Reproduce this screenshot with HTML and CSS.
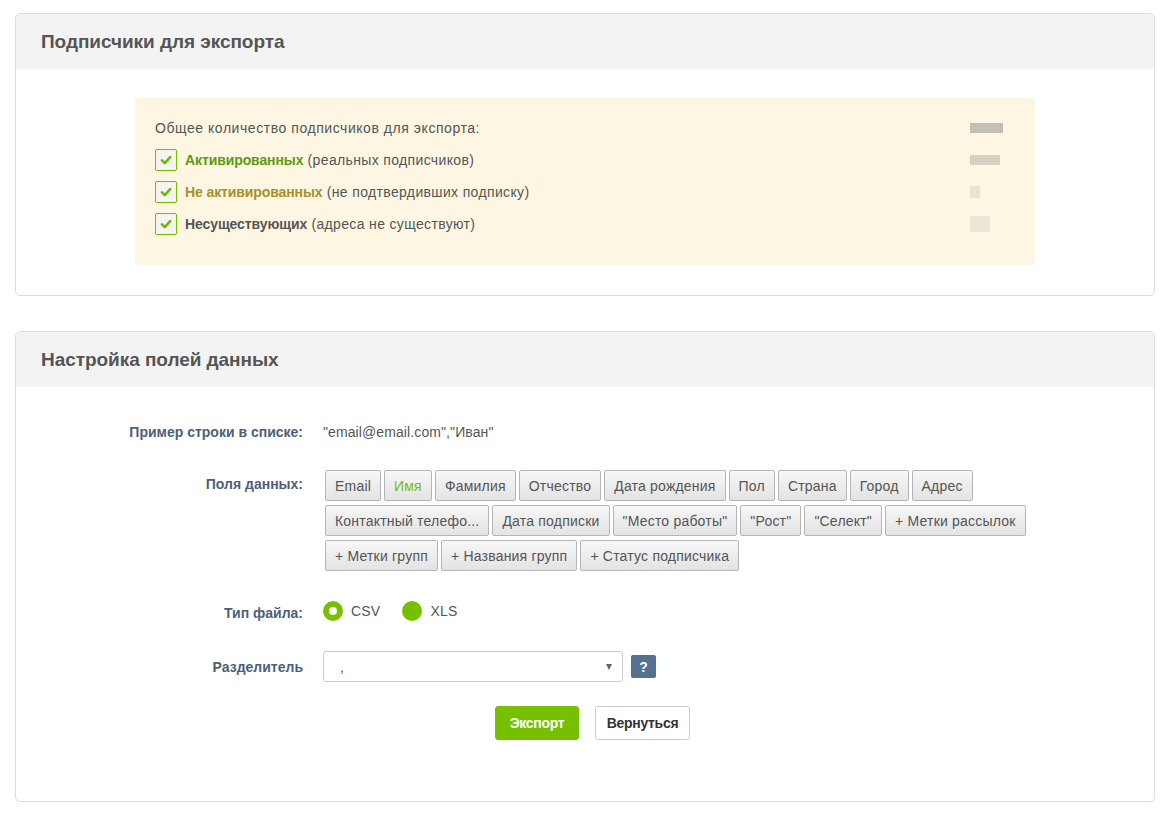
FILE: index.html
```html
<!DOCTYPE html>
<html lang="ru">
<head>
<meta charset="utf-8">
<title>Экспорт подписчиков</title>
<link rel="stylesheet" href="styles.css">
</head>
<body>
<div class="page">
  <section class="panel panel-summary">
    <header class="panel-head"><h2>Подписчики для экспорта</h2></header>
    <div class="panel-body">
      <div class="notice">
        <div class="notice-row notice-total">
          <span class="notice-text">Общее количество подписчиков для экспорта:</span>
          <span class="count-cell"><span class="count count-a"></span></span>
        </div>
        <div class="notice-row">
          <label class="check"><span class="box"><svg viewBox="0 0 12 12"><path d="M2.5 6.3 L5 8.6 L9.6 3.6" /></svg></span><b class="st-active">Активированных</b>&nbsp;(реальных подписчиков)</label>
          <span class="count-cell"><span class="count count-b"></span></span>
        </div>
        <div class="notice-row">
          <label class="check"><span class="box"><svg viewBox="0 0 12 12"><path d="M2.5 6.3 L5 8.6 L9.6 3.6" /></svg></span><b class="st-pending">Не активированных</b>&nbsp;(не подтвердивших подписку)</label>
          <span class="count-cell"><span class="count count-c"></span></span>
        </div>
        <div class="notice-row">
          <label class="check"><span class="box"><svg viewBox="0 0 12 12"><path d="M2.5 6.3 L5 8.6 L9.6 3.6" /></svg></span><b class="st-missing">Несуществующих</b>&nbsp;(адреса не существуют)</label>
          <span class="count-cell"><span class="count count-d"></span></span>
        </div>
      </div>
    </div>
  </section>

  <section class="panel panel-fields">
    <header class="panel-head"><h2>Настройка полей данных</h2></header>
    <div class="panel-body form">
      <div class="form-row row-sample">
        <div class="form-label">Пример строки в списке:</div>
        <div class="form-value sample">"email@email.com","Иван"</div>
      </div>
      <div class="form-row row-tags">
        <div class="form-label">Поля данных:</div>
        <div class="form-value tags">
          <span class="tag">Email</span>
          <span class="tag tag-on">Имя</span>
          <span class="tag">Фамилия</span>
          <span class="tag">Отчество</span>
          <span class="tag">Дата рождения</span>
          <span class="tag">Пол</span>
          <span class="tag">Страна</span>
          <span class="tag">Город</span>
          <span class="tag">Адрес</span>
          <span class="tag">Контактный телефо...</span>
          <span class="tag">Дата подписки</span>
          <span class="tag">"Место работы"</span>
          <span class="tag">"Рост"</span>
          <span class="tag">"Селект"</span>
          <span class="tag">+ Метки рассылок</span>
          <span class="tag">+ Метки групп</span>
          <span class="tag">+ Названия групп</span>
          <span class="tag">+ Статус подписчика</span>
        </div>
      </div>
      <div class="form-row row-type">
        <div class="form-label">Тип файла:</div>
        <div class="form-value radios">
          <label class="radio"><span class="dot dot-on"></span>CSV</label>
          <label class="radio"><span class="dot"></span>XLS</label>
        </div>
      </div>
      <div class="form-row row-sep">
        <div class="form-label">Разделитель</div>
        <div class="form-value sep">
          <div class="select"><span>,</span><span class="caret"></span></div>
          <span class="help">?</span>
        </div>
      </div>
      <div class="actions">
        <button class="btn btn-primary">Экспорт</button>
        <button class="btn btn-default">Вернуться</button>
      </div>
    </div>
  </section>
</div>
</body>
</html>
```

FILE: styles.css
```css
* { box-sizing: border-box; }
html, body { margin: 0; padding: 0; background: #fff; }
body {
  font-family: "Liberation Sans", Arial, sans-serif;
  font-size: 14px;
  color: #555;
}
.page {
  padding: 13px 16px 0 15px;
  display: flex;
  flex-direction: column;
  gap: 35px;
}
.panel {
  border: 1px solid #dcdcdc;
  border-radius: 5px;
  overflow: hidden;
}
.panel-head {
  background: #f3f3f3;
  height: 55px;
  display: flex;
  align-items: center;
  padding-left: 25px;
}
.panel-head h2 {
  margin: 0;
  font-size: 19px;
  font-weight: bold;
  color: #555;
  letter-spacing: -0.05px;
}
.panel-summary .panel-body {
  padding: 29px 119px 30px 119px;
}
.notice {
  background: #fcf6e2;
  border-radius: 3px;
  padding: 16px 30px 25px 20px;
  display: flex;
  flex-direction: column;
}
.notice-row {
  display: flex;
  justify-content: space-between;
  align-items: center;
  height: 32px;
}
.notice-total { height: 28px; margin-bottom: 2px; }
.notice-text { letter-spacing: 0.55px; }
.check { letter-spacing: 0.35px; }
.check {
  display: flex;
  align-items: center;
  color: #555;
}
.check b { letter-spacing: -0.1px; }
.box {
  width: 22px;
  height: 22px;
  border: 1px solid #74bd00;
  border-radius: 2px;
  background: #f4f4f0;
  margin-right: 8px;
  display: flex;
  align-items: center;
  justify-content: center;
}
.box svg { width: 14px; height: 14px; }
.box path { fill: none; stroke: #6fb800; stroke-width: 2.2; stroke-linecap: round; stroke-linejoin: round; }
.st-active { color: #5f9a10; }
.st-pending { color: #a98f2c; }
.st-missing { color: #555; }

/* counts are masked in this view */
.count-cell { width: 35px; display: flex; }
.count {
  display: block;
  background: #bcbab0;
  height: 10px;
  filter: blur(0.6px);
}
.count-a { width: 33px; opacity: .9; }
.count-b { width: 30px; opacity: .6; }
.count-c { width: 10px; height: 12px; opacity: .3; }
.count-d { width: 20px; height: 16px; opacity: .25; }

/* data fields form */
.form { padding: 35px 0 61px 0; }
.form-row {
  display: flex;
  align-items: flex-start;
}
.form-label {
  width: 287px;
  text-align: right;
  font-weight: bold;
  color: #4c6079;
  flex: none;
}
.form-value { margin-left: 20px; }
.row-sample .form-label, .row-sample .sample { line-height: 20px; }
.sample { color: #555; letter-spacing: 0.1px; }
.row-tags { margin-top: 28px; }
.row-tags .form-label { padding-top: 6px; }
.tags {
  width: 720px;
  display: flex;
  flex-wrap: wrap;
  gap: 4px 3px;
  margin-left: 22px;
}
.tag {
  display: inline-flex;
  align-items: center;
  height: 31px;
  padding: 0 9px;
  border: 1px solid #b5b5b5;
  border-radius: 2px;
  background: linear-gradient(#f7f7f7, #e3e3e3);
  color: #555;
  font-size: 14px;
  letter-spacing: 0.2px;
  white-space: nowrap;
}
.tag-on { color: #7dbb12; }
.row-type { margin-top: 30px; align-items: center; }
.row-type .form-label { padding-top: 4px; }
.radios { display: flex; gap: 22px; margin-left: 20px; }
.radio { display: flex; align-items: center; color: #555; letter-spacing: 0.2px; }
.dot {
  width: 20px;
  height: 20px;
  border-radius: 50%;
  background: #77c000;
  margin-right: 8px;
  position: relative;
}
.dot-on::after {
  content: "";
  position: absolute;
  left: 6px; top: 6px;
  width: 8px; height: 8px;
  border-radius: 50%;
  background: #fff;
}
.row-sep { margin-top: 30px; align-items: center; }
.sep { display: flex; align-items: center; gap: 8px; }
.select {
  width: 300px;
  height: 31px;
  border: 1px solid #ccc;
  border-radius: 3px;
  display: flex;
  align-items: center;
  justify-content: space-between;
  padding: 0 10px 0 16px;
  color: #555;
}
.caret {
  width: 0; height: 0;
  border-left: 3.5px solid transparent;
  border-right: 3.5px solid transparent;
  border-top: 6px solid #666;
}
.help {
  width: 25px;
  height: 23px;
  background: #56708f;
  border-radius: 2px;
  color: #fff;
  font-weight: bold;
  display: flex;
  align-items: center;
  justify-content: center;
  font-size: 14px;
}
.actions {
  display: flex;
  gap: 16px;
  margin-top: 24px;
  padding-left: 479px;
}
.btn {
  height: 34px;
  font-family: inherit;
  font-size: 14px;
  font-weight: bold;
  border-radius: 3px;
  padding: 0 10px;
  letter-spacing: -0.3px;
}
.btn-primary {
  background: #77c000;
  border: 1px solid #77c000;
  color: #fff;
  width: 84px;
}
.btn-default {
  background: #fff;
  border: 1px solid #ccc;
  color: #333;
  width: 95px;
}
```
